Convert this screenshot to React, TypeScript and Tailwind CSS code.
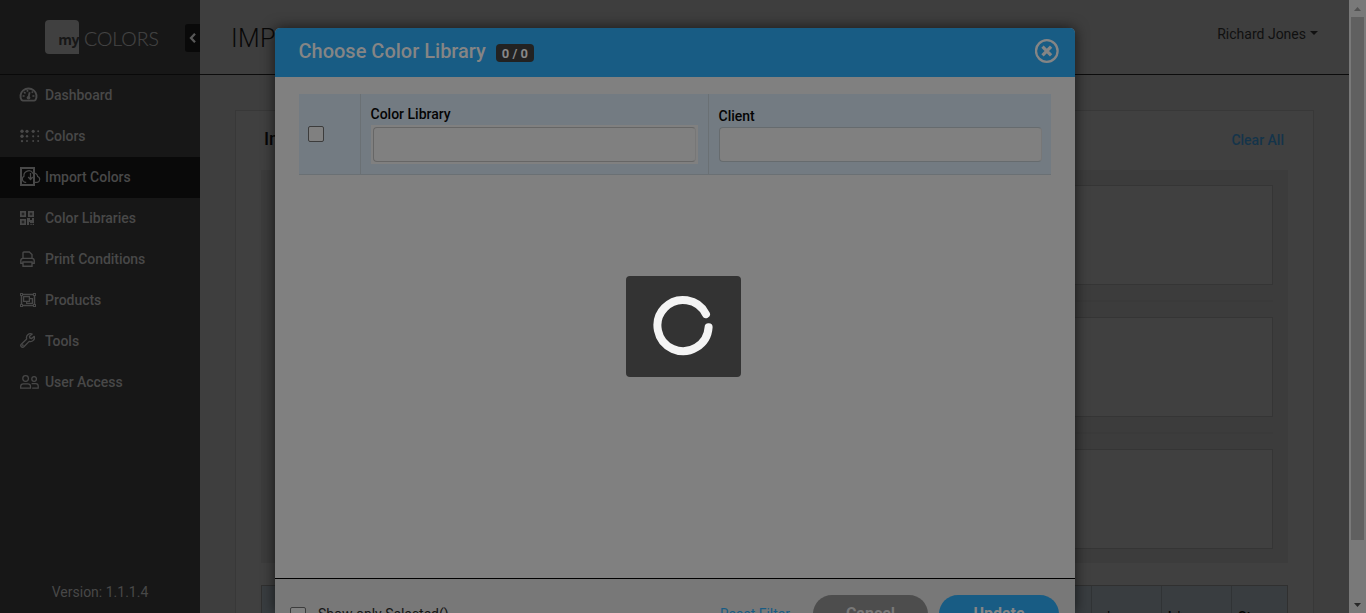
import { ReactNode } from "react";
import { FaRegObjectGroup } from "react-icons/fa";

const icons: Record<string, ReactNode> = {
  dashboard: (
    <svg className="-ml-px" width="19" height="16" viewBox="0 0 18 16" preserveAspectRatio="none" fill="none" stroke="currentColor">
      <path d="M2.6 13.2A7.6 7.6 0 1 1 15.4 13.2Q15 13.6 14.4 13.6H3.6Q3 13.6 2.6 13.2Z" strokeWidth="1.9" />
      <path d="M9 10.5l1.1-5.2" strokeWidth="1.7" />
      <circle cx="9" cy="10.8" r="1.8" fill="currentColor" stroke="none" />
      <path d="M3.4 9h1.9M12.7 9h1.9M4.7 5.2l1.5 1.2M8 3v1.8M12 5.6l1.3-1" strokeWidth="1.6" />
    </svg>
  ),
  colors: (
    <svg width="20" height="14" viewBox="0 0 20 14" fill="currentColor">
      <circle cx="2" cy="2.3" r="1.7" /><circle cx="7" cy="2.3" r="1.6" /><circle cx="13.2" cy="2.3" r="1.6" /><circle cx="18.2" cy="2.3" r="1" />
      <circle cx="2" cy="7.3" r="1.7" /><circle cx="7" cy="7.3" r="1.2" /><circle cx="13.2" cy="7.3" r="1.1" /><circle cx="18.2" cy="7.3" r="1" />
      <circle cx="2" cy="12.1" r="1.2" /><circle cx="7" cy="12.1" r="1" /><circle cx="13.2" cy="12.1" r="1" /><circle cx="18.2" cy="12.1" r="1" />
    </svg>
  ),
  import: (
    <svg className="shrink-0" width="21" height="19" viewBox="0 0 21 19" fill="none" stroke="currentColor">
      <path d="M1 1h13v17H1z" strokeWidth="2" />
      <path d="M6.2 15.3H5.6A3.2 3.2 0 0 1 4 9.3 4.8 4.8 0 0 1 12.9 6.2 3.6 3.6 0 0 1 17.6 9.5 3 3 0 0 1 17.3 15.3H14.5" strokeWidth="1.2" />
      <path d="M10.5 6v6.5M8.2 10l2.3 2.5 2.3-2.5" strokeWidth="1.3" />
    </svg>
  ),
  libraries: (
    <svg width="14" height="14" viewBox="0 0 14 14" fill="none" stroke="currentColor">
      <path d="M.9.9h4.2v4.2H.9zM8.9.9h4.2v4.2H8.9zM.9 8.9h4.2v4.2H.9z" strokeWidth="1.8" />
      <path d="M2.5 3h1M10.5 3h1M2.5 11h1" />
      <path d="M7 7h3v2h2V7h2v5h-4v-1H9v3H7zM10.4 12.7h1.3V14h-1.3zM12.6 12.7H14V14h-1.4z" fill="currentColor" stroke="none" />
    </svg>
  ),
  print: (
    <svg width="15" height="16" viewBox="0 0 15 16" fill="none" stroke="currentColor" strokeWidth="1.4">
      <path d="M3 7.5V2Q3 1 4 1h5.3L12 3.6v3.9" />
      <path d="M3 12.2H.8V9.6Q.8 7.4 3 7.4h9q2.2 0 2.2 2.2v2.6H12M3 11h9v4.2H3z" />
    </svg>
  ),
  products: <FaRegObjectGroup size={16} />,
  tools: (
    <svg width="15" height="15" viewBox="0 0 15 15" fill="none" stroke="currentColor" strokeWidth="1.3" strokeLinejoin="round">
      <path d="M12.2 1.1A4 4 0 0 0 6.7 6L1.3 11.2a1.8 1.8 0 0 0 2.6 2.5L9.2 8.4a4 4 0 0 0 5-5.1L11.7 5.5 9.8 5l-.3-1.8z" />
      <circle cx="2.7" cy="12.3" r=".4" />
    </svg>
  ),
  users: (
    <svg width="19" height="14" viewBox="0 0 19 14" fill="none" stroke="currentColor" strokeWidth="1.25">
      <circle cx="5.6" cy="3.5" r="2.8" />
      <circle cx="14.1" cy="4" r="2.3" />
      <path d="M.7 13.2v-1.8q0-2.6 2.6-2.6h4.6q2.6 0 2.6 2.6v1.8zM11.6 8.7h4.1q2.5 0 2.5 2.4v1.9h-6" />
    </svg>
  ),
};

const nav = [
  { label: "Dashboard", icon: "dashboard" },
  { label: "Colors", icon: "colors" },
  { label: "Import Colors", icon: "import" },
  { label: "Color Libraries", icon: "libraries" },
  { label: "Print Conditions", icon: "print" },
  { label: "Products", icon: "products" },
  { label: "Tools", icon: "tools" },
  { label: "User Access", icon: "users" },
];

function Sidebar() {
  return (
    <aside className="flex w-[200px] shrink-0 flex-col bg-[#171717] text-[#484848]">
      <div className="flex h-[75px] items-start border-b border-[#090909] pl-[45px] pt-5">
        <div className="flex h-[34px] w-[34px] items-end justify-end rounded-[4px] rounded-br-none bg-[#404040] pb-[3px] font-['Open_Sans',sans-serif] text-[14px] font-bold leading-[22px] text-[#171717]">
          <span className="-tracking-[0.5px]">my</span>
        </div>
        <svg className="ml-[5px] mt-[6px]" width="80" height="26">
          <text x="0" y="20" textLength="75" lengthAdjust="spacingAndGlyphs" fill="#444" stroke="#444" strokeWidth="0.2" fontFamily="Lato" fontWeight="300" fontSize="20">COLORS</text>
        </svg>
        <button className="ml-auto mt-1 flex h-7 w-[15px] shrink-0 items-center justify-center rounded-l-[3px] bg-[#090909]">
          <svg width="7" height="10" viewBox="0 0 7 10" fill="none" stroke="#585858" strokeWidth="2.3"><path d="M6 .8L2 5l4 4.2" /></svg>
        </button>
      </div>
      <nav>
        {nav.map((n) => (
          <a key={n.label} className={n.icon === "import" ? "flex h-[41px] items-center bg-[#090909] pb-0.5 pl-5" : "flex h-[41px] items-center pb-0.5 pl-5"}>
            <span className="flex w-[25px] shrink-0 items-center">{icons[n.icon]}</span>
            <span className="text-sm font-medium leading-5 -tracking-[0.04px]">{n.label}</span>
          </a>
        ))}
      </nav>
      <div className="mt-auto pb-[11px] text-center text-sm leading-5">Version: 1.1.1.4</div>
    </aside>
  );
}

function Main() {
  return (
    <main className="flex min-w-0 flex-1 flex-col bg-[#3e3e3e]">
      <header className="flex h-[75px] shrink-0 justify-between border-b border-[#0c0c0c] pl-[31px] pr-[31px] text-[#101010]">
        <h1 className="mt-[23px] text-[25px] font-light leading-8 tracking-[0.4px] text-[#080808]">IMPORT COLORS</h1>
        <div className="mt-6 flex h-5 items-center gap-1 text-sm">
          Richard Jones
          <span className="-mt-0.5 h-0 w-0 border-x-4 border-t-4 border-x-transparent border-t-[#101010]" />
        </div>
      </header>
      <section className="ml-[35px] mt-[35px] flex w-[1079px] grow flex-col border border-b-0 border-[#383838] bg-[#404040] px-[25px]">
        <div className="flex h-[59px] shrink-0 items-center justify-between pb-0.5 pl-[3px] pr-[4px]">
          <h2 className="-mt-0.5 text-lg font-medium text-[#060606]">Import Colors</h2>
          <a className="text-sm font-medium text-[#14344a]">Clear All</a>
        </div>
        <div className="flex h-[393px] shrink-0 flex-col bg-[#3c3c3c] px-[15px] pt-[15px]">
          <div className="h-[100px] border border-[#353535] bg-[#404040]" />
          <div className="my-[15px] h-[2px] bg-[#3a3a3a]" />
          <div className="h-[100px] border border-[#353535] bg-[#404040]" />
          <div className="my-[15px] h-[2px] bg-[#3a3a3a]" />
          <div className="h-[100px] border border-[#353535] bg-[#404040]" />
        </div>
        <div className="mt-[22px] flex h-[28px] justify-end overflow-hidden border border-b-0 border-[#303030] bg-[#393d40] text-sm font-medium leading-5 text-[#040404]">
          <div className="w-[70px] border-l border-[#303335] pl-[6px] pt-[21px]">a*</div>
          <div className="w-[70px] border-l border-[#303335] pl-[6px] pt-[21px]">b*</div>
          <div className="w-[56px] border-l border-[#303335] pl-[6px] pt-[21px]">St</div>
        </div>
      </section>
    </main>
  );
}

function Modal() {
  return (
    <div className="absolute left-[275px] top-[28px] flex h-[585px] w-[800px] flex-col rounded-t-[5px] bg-[#808080] shadow-[0_0_14px_rgba(0,0,0,0.65)]">
      <div className="flex h-[49px] shrink-0 items-center rounded-t-[5px] bg-[#185c84] pl-[23.5px] pr-4">
        <h2 className="-mt-[3px] text-xl font-medium text-[#858585]">Choose Color Library</h2>
        <span className="ml-[10px] mt-[1px] flex h-[18px] w-[38px] items-center justify-center rounded bg-[#222] pt-px text-[13px] font-bold text-[#888]">0 / 0</span>
        <svg className="-mt-[3px] ml-auto" width="24" height="24" viewBox="0 0 24 24" fill="none" stroke="#858585">
          <circle cx="11.8" cy="12" r="10.8" strokeWidth="2.3" />
          <path d="M7.5 7.7l8.6 8.6M16.1 7.7l-8.6 8.6" strokeWidth="3.3" />
        </svg>
      </div>
      <div className="grow px-6 pt-[17px]">
        <div className="flex h-[81px] border-b border-[#6a7074] bg-[#737b82] text-sm font-medium leading-5 text-[#040404]">
          <div className="w-[61px] pl-[9px] pt-8"><div className="h-4 w-4 rounded-[2px] border border-[#3c3c3c] bg-[#808080]" /></div>
          <div className="w-[348px] border-l border-[#6a7074] pl-[9.5px] pt-[10px]">
            <div>Color Library</div>
            <div className="ml-[0.5px] mt-[1px] h-[39px] w-[327px] bg-[#808080] pl-[2px] pt-[2px]">
              <div className="h-[35px] w-[323px] rounded border border-[#666] border-r-[#777]" />
            </div>
          </div>
          <div className="grow border-l border-[#6a7074] pl-[9.5px] pt-[12px]">
            <div>Client</div>
            <div className="ml-[0.5px] mt-[1px] h-[35px] w-[323px] rounded border border-[#666b6e] border-r-[#777] bg-[#808080]" />
          </div>
        </div>
      </div>
      <footer className="h-[35px] shrink-0 overflow-hidden border-t border-black bg-[#787878]">
        <div className="flex items-start pl-[15px] pt-4 text-sm leading-5">
          <div className="mt-[12px] h-4 w-4 rounded-[2px] border border-[#3c3c3c] bg-[#808080]" />
          <span className="ml-3 mt-[9px] text-[#151515]">Show only Selected()</span>
          <span className="ml-auto mt-[9px] text-[#185c84]">Reset Filter</span>
          <button className="ml-[23px] h-[38px] w-[115px] rounded-full bg-[#4d4d4d] text-base font-bold text-[#787878]">Cancel</button>
          <button className="ml-[11px] mr-4 h-[38px] w-[120px] rounded-full bg-[#185c84] text-base font-bold text-[#858585]">Update</button>
        </div>
      </footer>
    </div>
  );
}

export default function App() {
  return (
    <div className="relative flex h-[613px] w-[1366px] overflow-hidden font-[Roboto,sans-serif]">
      <Sidebar />
      <Main />
      <div className="flex w-[17px] shrink-0 flex-col items-center bg-[#797979]">
        <div className="flex h-[17px] items-center"><svg width="7" height="4"><path d="M0 4L3.5 0 7 4z" fill="#525252" /></svg></div>
        <div className="h-[523px] w-[13px] bg-[#606060]" />
        <div className="mt-auto flex h-[17px] items-center"><svg width="7" height="4"><path d="M0 0h7L3.5 4z" fill="#282828" /></svg></div>
      </div>
      <Modal />
      <div className="absolute left-[626px] top-[276px] flex h-[101px] w-[115px] justify-center rounded bg-[#333] pt-[19px]">
        <svg width="61" height="62" viewBox="0 0 61 62" fill="none">
          <path d="M53 19.2A25.6 25.6 0 1 0 55.6 32.2" stroke="#f4f4f4" strokeWidth="8" strokeLinecap="round" />
        </svg>
      </div>
    </div>
  );
}
